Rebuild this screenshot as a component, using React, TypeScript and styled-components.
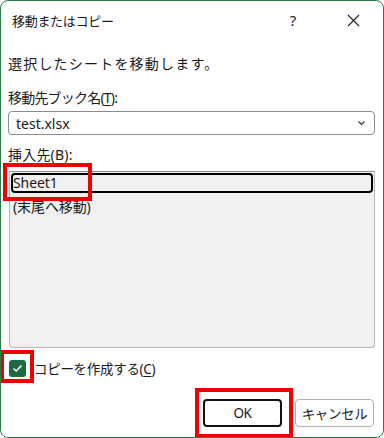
import React from "react";
import styled, { createGlobalStyle } from "styled-components";

const GlobalStyle = createGlobalStyle`
  html, body {
    margin: 0;
    padding: 0;
    background: #ffffff;
  }
  * {
    box-sizing: border-box;
  }
`;

const Window = styled.div`
  position: relative;
  width: 384px;
  height: 438px;
  border: 1px solid #2b7a4b;
  border-radius: 8px;
  background: #ffffff;
  font-family: "Noto Sans", "Noto Sans CJK JP", sans-serif;
  font-size: 13px;
  color: #1a1a1a;
  display: flex;
  flex-direction: column;
  overflow: hidden;
`;

const TitleBar = styled.div`
  height: 38px;
  display: flex;
  align-items: center;
  padding-left: 11px;
`;

const Title = styled.div`
  flex: 1;
  font-size: 13px;
  letter-spacing: -0.3px;
`;

const TitleButton = styled.div`
  width: 60px;
  height: 38px;
  display: flex;
  align-items: center;
  justify-content: center;
  font-size: 15px;
  color: #222;
`;

const Body = styled.div`
  flex: 1;
  display: flex;
  flex-direction: column;
  padding: 0 8px 0 7px;
`;

const Text = styled.div<{ $mt: number; $ls?: number }>`
  margin-top: ${(p) => p.$mt}px;
  line-height: 18px;
  height: 18px;
  font-size: 14px;
  white-space: nowrap;
  letter-spacing: ${(p) => p.$ls ?? 0.2}px;
`;

const Key = styled.span`
  text-decoration: underline;
  text-underline-offset: 2px;
`;

const Combo = styled.div`
  margin-top: 4px;
  height: 24px;
  border: 1px solid #8c8c8c;
  border-radius: 4px;
  display: flex;
  align-items: center;
  justify-content: space-between;
  padding: 0 8px 0 7px;
  font-size: 14px;
`;

const ListBox = styled.div`
  margin-top: 7px;
  height: 177px;
  margin-left: 1px;
  border: 1px solid #b8b8b8;
  border-top-color: #8c8c8c;
  border-radius: 0 0 4px 4px;
  background: #f0f0f0;
  padding: 1px 0 0 1px;
`;

const ListItem = styled.div<{ $focus?: boolean }>`
  height: 20px;
  line-height: ${(p) => (p.$focus ? "16px" : "20px")};
  padding-left: ${(p) => (p.$focus ? "0" : "2px")};
  font-size: 14px;
  border: ${(p) => (p.$focus ? "2px solid #000" : "none")};
  border-radius: 4px;
  margin-right: 1px;
  margin-top: ${(p) => (p.$focus ? "0" : "4px")};
  letter-spacing: -0.1px;
  white-space: nowrap;
`;

const CheckRow = styled.div`
  margin-top: 11px;
  height: 18px;
  display: flex;
  align-items: center;
  gap: 8px;
  letter-spacing: -0.3px;
  font-size: 13.5px;
`;

const CheckBox = styled.div`
  width: 17px;
  height: 17px;
  margin-left: 1px;
  border-radius: 3px;
  background: #1d6b42;
  display: flex;
  align-items: center;
  justify-content: center;
`;

const ButtonRow = styled.div`
  margin-top: 22px;
  display: flex;
  justify-content: flex-end;
  gap: 13px;
  padding-right: 1px;
`;

const Button = styled.div<{ $primary?: boolean }>`
  width: 79px;
  height: 28px;
  border-radius: 4px;
  border: ${(p) => (p.$primary ? "2px solid #111" : "1px solid #b0b0b0")};
  background: #ffffff;
  display: flex;
  align-items: center;
  justify-content: center;
  font-size: 13.5px;
  letter-spacing: -0.4px;
`;

const Mark = styled.div<{ $x: number; $y: number; $w: number; $h: number }>`
  position: absolute;
  left: ${(p) => p.$x}px;
  top: ${(p) => p.$y}px;
  width: ${(p) => p.$w}px;
  height: ${(p) => p.$h}px;
  border: 4px solid #ee0000;
  pointer-events: none;
`;

export default function App() {
  return (
    <>
      <GlobalStyle />
      <Window>
        <TitleBar>
          <Title>移動またはコピー</Title>
          <TitleButton>?</TitleButton>
          <TitleButton>
            <svg width="13" height="13" viewBox="0 0 13 13">
              <path d="M1 1 L12 12 M12 1 L1 12" stroke="#222" strokeWidth="1.1" fill="none" />
            </svg>
          </TitleButton>
        </TitleBar>
        <Body>
          <Text $mt={16} $ls={1.2}>
            選択したシートを移動します。
          </Text>
          <Text $mt={16} $ls={-0.8}>
            移動先ブック名(<Key>T</Key>):
          </Text>
          <Combo>
            <span>test.xlsx</span>
            <svg width="9" height="6" viewBox="0 0 9 6">
              <path d="M1.5 1.5 L4.5 4.5 L7.5 1.5" stroke="#333" strokeWidth="1.2" fill="none" />
            </svg>
          </Combo>
          <Text $mt={11}>挿入先(B):</Text>
          <ListBox>
            <ListItem $focus>Sheet1</ListItem>
            <ListItem>(末尾へ移動)</ListItem>
          </ListBox>
          <CheckRow>
            <CheckBox>
              <svg width="11" height="9" viewBox="0 0 11 9">
                <path d="M1.5 4.5 L4.2 7 L9.5 1.5" stroke="#fff" strokeWidth="1.6" fill="none" />
              </svg>
            </CheckBox>
            <span>
              コピーを作成する(<Key>C</Key>)
            </span>
          </CheckRow>
          <ButtonRow>
            <Button $primary>OK</Button>
            <Button>キャンセル</Button>
          </ButtonRow>
        </Body>
        <Mark $x={2} $y={162} $w={89} $h={38} />
        <Mark $x={-1} $y={349} $w={34} $h={33} />
        <Mark $x={194} $y={387} $w={98} $h={50} />
      </Window>
    </>
  );
}
